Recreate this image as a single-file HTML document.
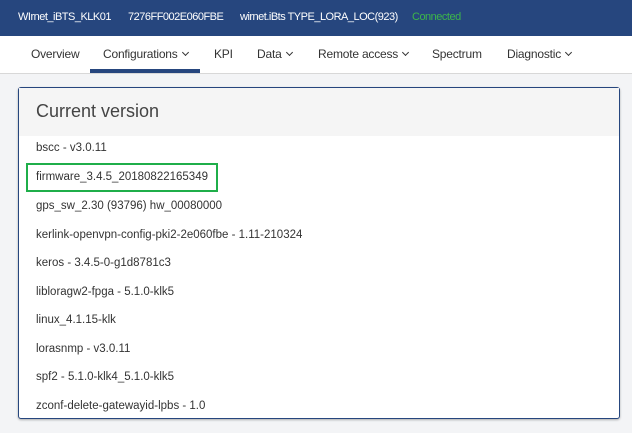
<!DOCTYPE html>
<html><head><style>
*{margin:0;padding:0;box-sizing:border-box}
body{width:632px;height:433px;background:#f3f4f6;font-family:"Liberation Sans",sans-serif;position:relative;overflow:hidden}
.top{position:absolute;left:0;top:0;width:632px;height:36px;background:#26467e;color:#fff;font-size:11px}
.top span{position:absolute;top:11px;letter-spacing:-0.5px}
.nav{position:absolute;left:0;top:36px;width:632px;height:38px;background:#fff;border-bottom:1px solid #d8d8d8;font-size:12px;color:#333}
.nav span{position:absolute;top:11px;letter-spacing:-0.2px}
.ch{display:inline-block;width:5px;height:5px;border-right:1.2px solid #333;border-bottom:1.2px solid #333;transform:rotate(45deg);margin-left:5px;position:relative;top:-3px}
.ul{position:absolute;left:90px;top:69px;width:110px;height:4px;background:#26467e}
.card{position:absolute;left:18px;top:87px;width:602px;height:332px;background:#fff;border:1px solid #26467e;border-radius:3px;box-shadow:0 1px 2px rgba(0,0,0,.3)}
.hd{height:48px;background:#f5f5f5;font-size:18px;color:#444;padding:13px 0 0 17px}
.it{position:absolute;left:17px;font-size:11.5px;color:#333}
.gb{position:absolute;left:7px;top:75px;width:192px;height:29px;border:2px solid #1fae4a}
</style></head><body>
<div class="top">
<span style="left:18px">WIrnet_iBTS_KLK01</span>
<span style="left:128px">7276FF002E060FBE</span>
<span style="left:240px">wirnet.iBts TYPE_LORA_LOC(923)</span>
<span style="left:412px;color:#3cb54a">Connected</span>
</div>
<div class="nav">
<span style="left:31px">Overview</span>
<span style="left:103px">Configurations<i class="ch"></i></span>
<span style="left:214px">KPI</span>
<span style="left:257px">Data<i class="ch"></i></span>
<span style="left:318px">Remote access<i class="ch"></i></span>
<span style="left:432px">Spectrum</span>
<span style="left:507px">Diagnostic<i class="ch"></i></span>
</div>
<div class="ul"></div>
<div class="card">
<div class="hd">Current version</div>
<div class="gb"></div>
<div class="it" style="top:54px">bscc - v3.0.11</div>
<div class="it" style="top:83px">firmware_3.4.5_20180822165349</div>
<div class="it" style="top:112px">gps_sw_2.30 (93796) hw_00080000</div>
<div class="it" style="top:141px">kerlink-openvpn-config-pki2-2e060fbe - 1.11-210324</div>
<div class="it" style="top:169px">keros - 3.4.5-0-g1d8781c3</div>
<div class="it" style="top:198px">libloragw2-fpga - 5.1.0-klk5</div>
<div class="it" style="top:226px">linux_4.1.15-klk</div>
<div class="it" style="top:255px">lorasnmp - v3.0.11</div>
<div class="it" style="top:283px">spf2 - 5.1.0-klk4_5.1.0-klk5</div>
<div class="it" style="top:312px">zconf-delete-gatewayid-lpbs - 1.0</div>
</div>
</body></html>
